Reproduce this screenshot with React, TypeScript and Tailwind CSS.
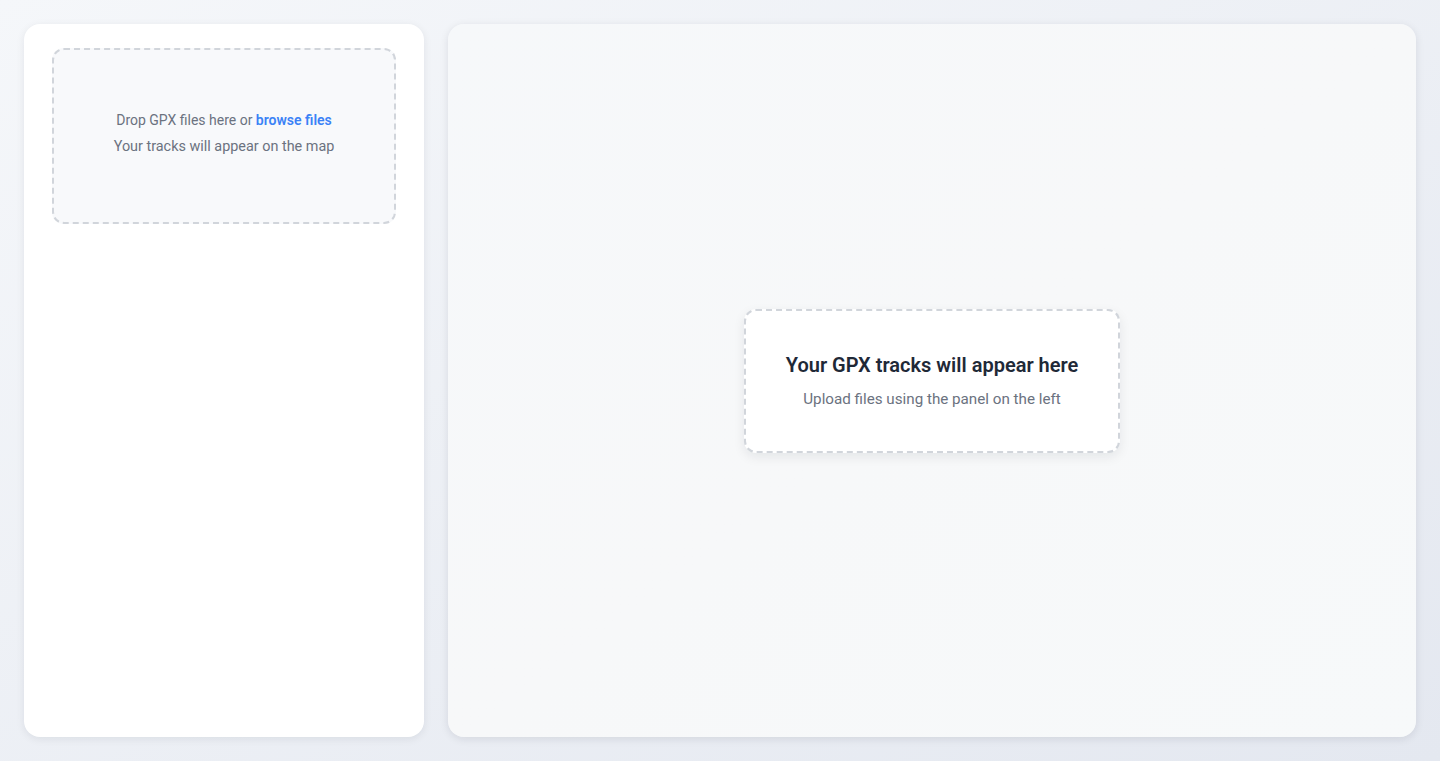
export default function App() {
  return (
    <div className="flex h-[761px] w-full gap-6 bg-gradient-to-br from-[#f5f7fa] to-[#e4e8f0] p-6 font-['Roboto',_'Liberation_Sans',_sans-serif]">
      <aside className="flex w-[400px] shrink-0 flex-col rounded-2xl bg-white px-7 pt-6 shadow-[0_2px_8px_rgba(15,23,42,0.08)]">
        <div className="flex h-[176px] flex-col items-center justify-center rounded-xl border-2 border-dashed border-[#d1d5db] bg-[#f8f9fb] pb-1.5 text-center text-[#6b7280]">
          <p className="text-sm leading-[26px]">
            Drop GPX files here or <span className="font-semibold text-[#3b82f6]">browse files</span>
          </p>
          <p className="mt-px text-[14.4px] leading-[26px]">Your tracks will appear on the map</p>
        </div>
      </aside>

      <main className="flex flex-1 items-center justify-center overflow-hidden rounded-2xl bg-gradient-to-br from-[#f6f8fa] via-[#f7f8f9] to-[#f7f9fa] shadow-[0_2px_8px_rgba(15,23,42,0.1)]">
        <div className="rounded-xl border-2 border-dashed border-[#d1d5db] bg-white px-10 py-10 text-center shadow-[0_4px_12px_rgba(15,23,42,0.08)]">
          <h2 className="mb-2 text-xl leading-7 font-semibold text-[#1f2937]">Your GPX tracks will appear here</h2>
          <p className="text-[15.2px] leading-6 text-[#6b7280]">Upload files using the panel on the left</p>
        </div>
      </main>
    </div>
  );
}
